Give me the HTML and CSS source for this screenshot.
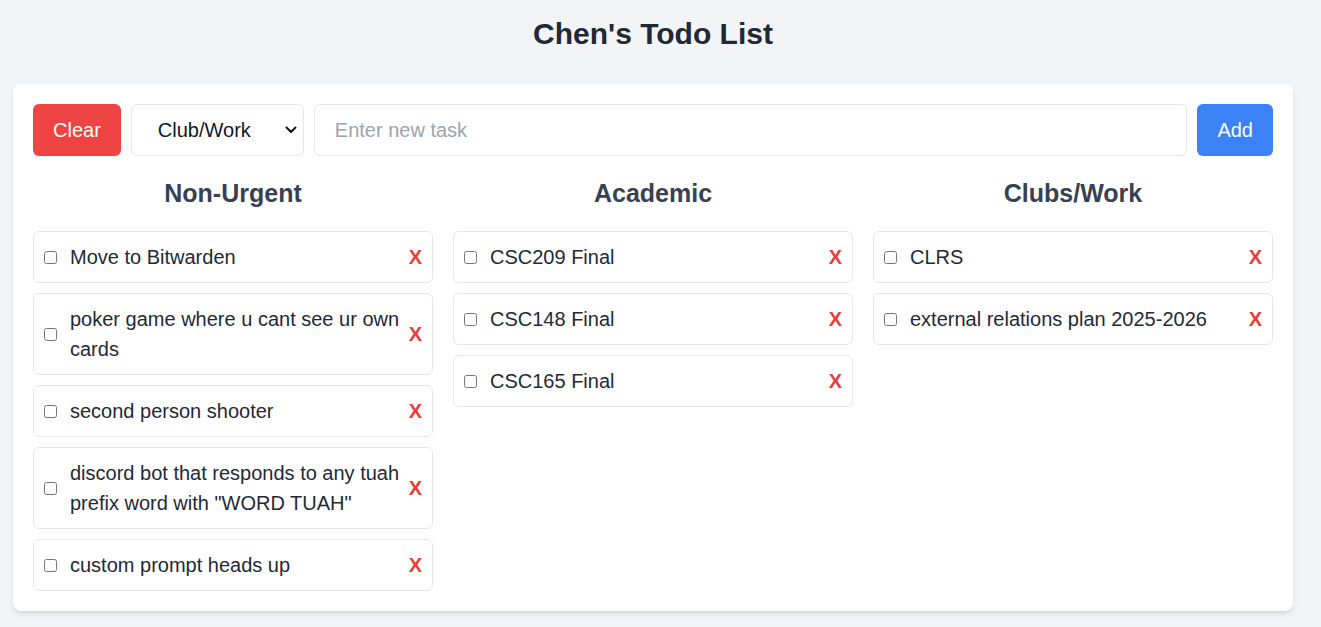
FILE: index.html
```html
<!DOCTYPE html>
<html lang="en">
<head>
<meta charset="utf-8">
<title>Chen's Todo List</title>
<link rel="stylesheet" href="styles.css">
</head>
<body>
<div class="page">
  <h1 class="title">Chen's Todo List</h1>
  <div class="card">
    <div class="toolbar">
      <button class="btn btn-clear">Clear</button>
      <div class="select-wrap">
        <select class="category">
          <option>Non-Urgent</option>
          <option>Academic</option>
          <option selected>Club/Work</option>
        </select>
        <svg class="chevron" width="12" height="8" viewBox="0 0 12 8"><path d="M1.5 1.5 L6 6 L10.5 1.5" fill="none" stroke="#111" stroke-width="2" stroke-linecap="round" stroke-linejoin="round"/></svg>
      </div>
      <input class="task-input" type="text" placeholder="Enter new task">
      <button class="btn btn-add">Add</button>
    </div>
    <div class="columns">
      <div class="column">
        <h2 class="col-title">Non-Urgent</h2>
        <div class="item"><input type="checkbox" class="check"><span class="text">Move to Bitwarden</span><button class="del">X</button></div>
        <div class="item"><input type="checkbox" class="check"><span class="text">poker game where u cant see ur own cards</span><button class="del">X</button></div>
        <div class="item"><input type="checkbox" class="check"><span class="text">second person shooter</span><button class="del">X</button></div>
        <div class="item"><input type="checkbox" class="check"><span class="text">discord bot that responds to any tuah prefix word with "WORD TUAH"</span><button class="del">X</button></div>
        <div class="item"><input type="checkbox" class="check"><span class="text">custom prompt heads up</span><button class="del">X</button></div>
      </div>
      <div class="column">
        <h2 class="col-title">Academic</h2>
        <div class="item"><input type="checkbox" class="check"><span class="text">CSC209 Final</span><button class="del">X</button></div>
        <div class="item"><input type="checkbox" class="check"><span class="text">CSC148 Final</span><button class="del">X</button></div>
        <div class="item"><input type="checkbox" class="check"><span class="text">CSC165 Final</span><button class="del">X</button></div>
      </div>
      <div class="column">
        <h2 class="col-title">Clubs/Work</h2>
        <div class="item"><input type="checkbox" class="check"><span class="text">CLRS</span><button class="del">X</button></div>
        <div class="item"><input type="checkbox" class="check"><span class="text">external relations plan 2025-2026</span><button class="del">X</button></div>
      </div>
    </div>
  </div>
</div>
</body>
</html>
```

FILE: styles.css
```css
* { box-sizing: border-box; }
html, body { margin: 0; padding: 0; }
body {
  background: #f3f4f6;
  font-family: "Liberation Sans", Arial, sans-serif;
  color: #1f2937;
}
.page {
  width: 1306px;
  padding: 11px 13px 20px;
}
.title {
  margin: 0 0 28px;
  text-align: center;
  font-size: 30px;
  line-height: 45px;
  font-weight: 700;
  color: #1f2937;
}
.card {
  background: #fff;
  border-radius: 8px;
  padding: 20px;
  box-shadow: 0 4px 6px -1px rgba(0,0,0,0.1), 0 2px 4px -2px rgba(0,0,0,0.1);
}
.toolbar {
  display: flex;
  gap: 10px;
  height: 52px;
}
.btn {
  border: none;
  border-radius: 6px;
  padding: 0 20px;
  font-family: inherit;
  font-size: 20px;
  line-height: 30px;
  color: #fff;
  cursor: pointer;
}
.btn-clear { background: #ef4444; }
.btn-add { background: #3b82f6; }
.select-wrap {
  position: relative;
  width: 173px;
  flex: none;
}
.category {
  appearance: none;
  -webkit-appearance: none;
  width: 100%;
  height: 100%;
  border: 1px solid #e5e7eb;
  border-radius: 6px;
  background: #fff;
  padding: 0 0 0 26px;
  font-family: inherit;
  font-size: 20px;
  color: #111827;
}
.chevron {
  position: absolute;
  right: 7px;
  top: 22px;
  pointer-events: none;
}
.task-input {
  flex: 1;
  min-width: 0;
  border: 1px solid #e5e7eb;
  border-radius: 6px;
  padding: 10px 20px;
  font-family: inherit;
  font-size: 20px;
  line-height: 30px;
  color: #1f2937;
}
.task-input::placeholder { color: #9ca3af; }
.columns {
  display: grid;
  grid-template-columns: repeat(3, 1fr);
  gap: 20px;
  margin-top: 20px;
  align-items: start;
}
.column {
  display: flex;
  flex-direction: column;
  gap: 10px;
}
.col-title {
  margin: 0 0 10px;
  text-align: center;
  font-size: 25px;
  line-height: 35px;
  font-weight: 700;
  color: #374151;
}
.item {
  display: flex;
  align-items: center;
  border: 1px solid #e5e7eb;
  border-radius: 6px;
  padding: 10px;
  font-size: 20px;
  line-height: 30px;
  color: #1f2937;
}
.check {
  margin: 0 13px 0 0;
  width: 13px;
  height: 13px;
  flex: none;
}
.text {
  flex: 1;
  min-width: 0;
}
.del {
  flex: none;
  margin-left: 5px;
  border: none;
  background: none;
  padding: 0;
  font-family: inherit;
  font-size: 20px;
  font-weight: 700;
  line-height: 30px;
  color: #e53e3e;
  cursor: pointer;
}
```
